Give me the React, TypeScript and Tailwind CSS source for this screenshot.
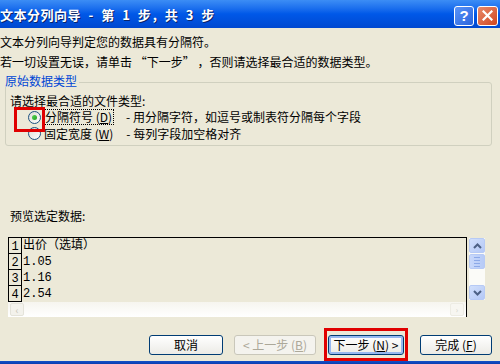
import React from 'react';

const font = { fontFamily: '"Noto Sans CJK SC", "Liberation Sans", sans-serif' };

const rows = ['出价（选填）', '1.05', '1.16', '2.54'];

export default function App() {
  return (
    <div className="w-[500px] h-[364px] overflow-hidden bg-[#ECE9D8] flex flex-col text-[12px] text-black leading-none" style={font}>
      <TitleBar />

      <div className="flex flex-col flex-1 relative">
        <div className="h-[20px] mt-[4px] flex items-center whitespace-nowrap">文本分列向导判定您的数据具有分隔符。</div>
        <div className="h-[20px] flex items-center whitespace-nowrap">若一切设置无误，请单击 “下一步” ，否则请选择最合适的数据类型。</div>

        <div className="relative ml-[5px] mr-[8px] mt-[10px] h-[64px] border border-[#D0D0BF] rounded-[3px]">
          <span className="absolute -top-[8px] left-[-1px] bg-[#ECE9D8] pr-[2px] text-[#0046D5] text-[12px]">原始数据类型</span>
          <div className="pt-[11px] pl-[4px] flex flex-col">
            <div className="h-[14px] flex items-center">请选择最合适的文件类型:</div>
            <div className="h-[16px] mt-[1px] flex items-center pl-[18px]">
              <Radio checked />
              <span className="ml-[2px] border border-dotted border-black px-[1px] h-[16px] flex items-center">
                分隔符号 (<u>D</u>)
              </span>
              <span className="ml-[12px]">- 用分隔字符，如逗号或制表符分隔每个字段</span>
            </div>
            <div className="h-[17px] flex items-center pl-[18px]">
              <Radio />
              <span className="ml-[3px]">固定宽度 (<u>W</u>)</span>
              <span className="ml-[13px]">- 每列字段加空格对齐</span>
            </div>
          </div>
          <div className="absolute left-[8px] top-[24px] w-[31px] h-[25px] border-[3px] border-[#E00000]" />
        </div>

        <div className="h-[14px] mt-[63px] ml-[10px] flex items-center">预览选定数据:</div>

        <div className="mt-[14px] ml-[8px] flex">
          <div className="w-[459px] h-[80px] flex flex-col border-t border-r border-black">
            <div className="flex-1 overflow-hidden flex flex-col">
              {rows.map((r, i) => (
                <div key={i} className="h-[16px] flex shrink-0">
                  <div className="w-[14px] border-x border-b border-black flex items-end justify-center text-[12px]" style={{ fontFamily: '"Liberation Mono", monospace' }}>
                    {i + 1}
                  </div>
                  <div className="pl-[1px] flex items-center" style={{ fontFamily: '"Liberation Mono", "Noto Sans CJK SC", monospace' }}>{r}</div>
                </div>
              ))}
            </div>
            <div className="h-[15px] bg-gradient-to-b from-[#F6F5EF] to-[#FFFFFF] flex items-center justify-between px-[2px]">
              <div className="w-[14px] h-[13px] rounded-[2px] border border-[#E4E3DA] bg-[#F3F2EC] flex items-center justify-center text-[#C9C7BA] text-[10px]">‹</div>
              <div className="w-[14px] h-[13px] rounded-[2px] border border-[#EDECE4] bg-[#F7F6F1] flex items-center justify-center text-[#D5D3C8] text-[8px]">›</div>
            </div>
          </div>
          <div className="w-[16px] h-[62px] mt-[1px] flex flex-col bg-[#FBFBF8] ml-[2px]">
            <ScrollBtn dir="up" />
            <div className="h-[15px] mt-[1px] rounded-[2px] border border-[#B7CAF5] bg-gradient-to-r from-[#C8D8FB] to-[#B7CBF7] flex flex-col items-center justify-center gap-[2px]">
              <div className="w-[6px] h-px bg-[#8CA9E8]" />
              <div className="w-[6px] h-px bg-[#8CA9E8]" />
              <div className="w-[6px] h-px bg-[#8CA9E8]" />
              <div className="w-[6px] h-px bg-[#8CA9E8]" />
            </div>
            <div className="flex-1" />
            <ScrollBtn dir="down" />
          </div>
        </div>

        <div className="mt-[18px] flex items-start h-[20px]">
          <XpButton className="ml-[149px] w-[74px]">取消</XpButton>
          <XpButton className="ml-[11px] w-[82px]" disabled>
            &lt; 上一步 (<u>B</u>)
          </XpButton>
          <div className="ml-[8px] border-[3px] border-[#E00000] px-[1px] pt-[4px] pb-[3px] -mt-[7px]">
            <XpButton className="w-[76px]" focused>
              下一步 (<u>N</u>) &gt;
            </XpButton>
          </div>
          <XpButton className="ml-[12px] w-[72px]">完成 (<u>F</u>)</XpButton>
        </div>

        <div className="absolute left-0 right-0 bottom-0 h-[3px] bg-gradient-to-b from-[#1450C8] to-[#0A3DB0]" />
      </div>
    </div>
  );
}

function TitleBar() {
  return (
    <div className="h-[28px] shrink-0 bg-gradient-to-b from-[#3C8DF5] via-[#0058E8] to-[#0048D0] flex items-center justify-between pr-[2px]">
      <span className="text-white font-bold text-[13px] whitespace-nowrap tracking-[0.5px] [word-spacing:4px] [text-shadow:1px_1px_0_#0A246A]">
        文本分列向导 - 第 1 步，共 3 步
      </span>
      <div className="flex gap-[3px] mt-[3px]">
        <div className="w-[20px] h-[20px] rounded-[3px] border border-white bg-gradient-to-br from-[#5A94F8] to-[#2A63DC] flex items-center justify-center text-white font-bold text-[15px]" style={{ fontFamily: '"Liberation Sans", sans-serif' }}>
          ?
        </div>
        <div className="w-[21px] h-[20px] rounded-[3px] border border-white bg-gradient-to-br from-[#E88A6A] to-[#D0431C] flex items-center justify-center">
          <svg width="11" height="11" viewBox="0 0 11 11">
            <path d="M1.5 1.5 L9.5 9.5 M9.5 1.5 L1.5 9.5" stroke="white" strokeWidth="2.2" strokeLinecap="square" />
          </svg>
        </div>
      </div>
    </div>
  );
}

function Radio({ checked }: { checked?: boolean }) {
  return (
    <div className="w-[13px] h-[13px] rounded-full border border-[#1C5180] bg-gradient-to-br from-[#DCDBD3] to-[#FFFFFF] flex items-center justify-center shrink-0">
      {checked && <div className="w-[5px] h-[5px] rounded-full bg-gradient-to-br from-[#55D351] to-[#21A121]" />}
    </div>
  );
}

function ScrollBtn({ dir }: { dir: 'up' | 'down' }) {
  return (
    <div className="h-[15px] rounded-[2px] border border-[#B7CAF5] bg-gradient-to-br from-[#D2E0FC] to-[#B4C8F6] flex items-center justify-center">
      <svg width="9" height="6" viewBox="0 0 9 6">
        <path d={dir === 'up' ? 'M1 5 L4.5 1.5 L8 5' : 'M1 1 L4.5 4.5 L8 1'} fill="none" stroke="#4D6185" strokeWidth="2" />
      </svg>
    </div>
  );
}

function XpButton({ children, className, disabled, focused }: { children: React.ReactNode; className?: string; disabled?: boolean; focused?: boolean }) {
  return (
    <div
      className={`h-[20px] rounded-[3px] flex items-center justify-center whitespace-nowrap text-[12px] ${
        disabled ? 'border border-[#C9C7BA] text-[#ACA899] bg-[#F4F3EE]' : 'border border-[#003C74] bg-gradient-to-b from-[#FFFFFF] to-[#ECEBE6]'
      } ${focused ? 'shadow-[inset_0_0_0_2px_#97B8F0]' : ''} ${className || ''}`}
    >
      {children}
    </div>
  );
}
